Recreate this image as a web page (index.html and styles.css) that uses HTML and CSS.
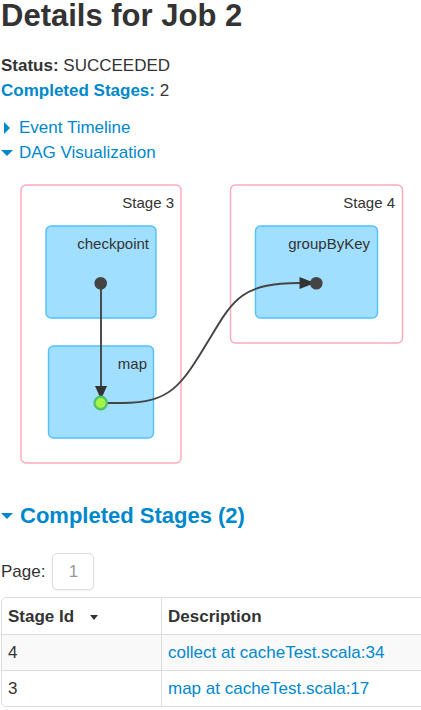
FILE: index.html
```html
<!DOCTYPE html>
<html lang="en">
<head>
<meta charset="utf-8">
<title>Details for Job 2</title>
<link rel="stylesheet" href="styles.css">
</head>
<body>
<main>
  <h1>Details for Job 2</h1>
  <ul class="summary">
    <li><strong>Status:</strong> SUCCEEDED</li>
    <li><a href="#completed"><strong>Completed Stages:</strong></a> 2</li>
  </ul>
  <nav class="toggles">
    <a href="#timeline"><span class="arrow closed"></span>Event Timeline</a>
    <a href="#dag"><span class="arrow open"></span>DAG Visualization</a>
  </nav>
  <svg class="dag" id="dag" width="420" height="320" viewBox="0 165 420 320" role="img" aria-label="DAG Visualization">
    <g class="stage">
      <rect x="21" y="185" width="160" height="278" rx="5"/>
      <rect x="230.500" y="185" width="172" height="158" rx="5"/>
    </g>
    <g class="operation">
      <rect x="46" y="226" width="110" height="92" rx="5"/>
      <rect x="48.500" y="346" width="105" height="92" rx="5"/>
      <rect x="255.500" y="226" width="122" height="92" rx="5"/>
    </g>
    <g class="label">
      <text x="174" y="208">Stage 3</text>
      <text x="149" y="249">checkpoint</text>
      <text x="147" y="369">map</text>
      <text x="395" y="208">Stage 4</text>
      <text x="370" y="249">groupByKey</text>
    </g>
    <g class="edge">
      <path d="M101 283V390"/>
      <path d="M101 403H122C170 403 181 386 207 343C233 300 240 283 300 283H304"/>
    </g>
    <g class="head">
      <path d="M95 386H107L102.500 396H99.500Z"/>
      <path d="M299.500 277V289L311 284.500V281.500Z"/>
    </g>
    <circle class="node" cx="100.700" cy="283.200" r="6.300"/>
    <circle class="node" cx="316.300" cy="283.200" r="6.300"/>
    <circle class="cached" cx="100.700" cy="403" r="6.200"/>
  </svg>
  <h2 id="completed"><a href="#completed"><span class="arrow open"></span>Completed Stages (2)</a></h2>
  <div class="pager">Page: <button type="button" disabled>1</button></div>
  <div class="table-wrap">
    <table>
      <thead>
        <tr><th scope="col" class="id">Stage Id<span class="sort"></span></th><th scope="col">Description</th></tr>
      </thead>
      <tbody>
        <tr><td>4</td><td><a href="#stage4">collect at cacheTest.scala:34</a></td></tr>
        <tr><td>3</td><td><a href="#stage3">map at cacheTest.scala:17</a></td></tr>
      </tbody>
    </table>
  </div>
</main>
</body>
</html>
```
FILE: styles.css
```css
* { box-sizing: border-box; }
body {
  margin: 0;
  background: #fff;
  color: #333;
  font: 17px/25px "Liberation Sans", Arial, sans-serif;
}
main { padding-left: 1px; }
h1 { margin: 0 0 21px; font-size: 31px; line-height: 32px; }
a { color: #08c; text-decoration: none; }
.summary { margin: 0 0 12px; padding: 0; list-style: none; }
.toggles { display: flex; flex-direction: column; align-items: flex-start; }
.toggles a, h2 a { display: flex; align-items: center; }
.arrow { width: 18px; flex: none; display: flex; }
.arrow::before { content: ""; border: 6px solid transparent; }
.closed::before { border-left-color: #08c; border-right-width: 0; margin-left: 3px; }
.open::before { border-top-color: #08c; border-bottom-width: 0; }
.dag { display: block; margin-left: -1px; }
.stage rect { fill: #fff; stroke: #ffa8b8; stroke-width: 1.400; }
.operation rect { fill: #a0dfff; stroke: #52c0fc; stroke-width: 1.400; }
.label text { fill: #333; font-size: 15px; text-anchor: end; }
.edge path { fill: none; stroke: #444; stroke-width: 1.900; }
.head path { fill: #333; }
.node { fill: #444; }
.cached { fill: #a3f545; stroke: #52c366; stroke-width: 2.400; }
h2 { margin: 17px 0 23px; font-size: 22px; line-height: 28px; }
h2 .arrow { width: 19px; }
.pager { display: flex; align-items: center; gap: 7px; margin-bottom: 7px; }
.pager button {
  width: 42px;
  height: 37px;
  padding: 0;
  border: 1px solid #ddd;
  border-radius: 5px;
  background: #fff;
  box-shadow: 0 1px 2px rgba(0, 0, 0, .05);
  color: #999;
  font: inherit;
}
.table-wrap { overflow: hidden; }
table {
  width: calc(100% + 10px);
  border: 1px solid #ddd;
  border-radius: 5px;
  border-collapse: separate;
  border-spacing: 0;
}
th, td { padding: 5px 6px; text-align: left; border-top: 1px solid #ddd; }
th { padding-top: 6px; border-top: 0; }
th + th, td + td { border-left: 1px solid #ddd; }
.id { width: 159px; }
.sort {
  display: inline-block;
  margin-left: 16px;
  border: 4px solid transparent;
  border-top: 5px solid #333;
  border-bottom: 0;
  vertical-align: middle;
}
tbody tr:nth-child(odd) td { background: #f9f9f9; }
```
